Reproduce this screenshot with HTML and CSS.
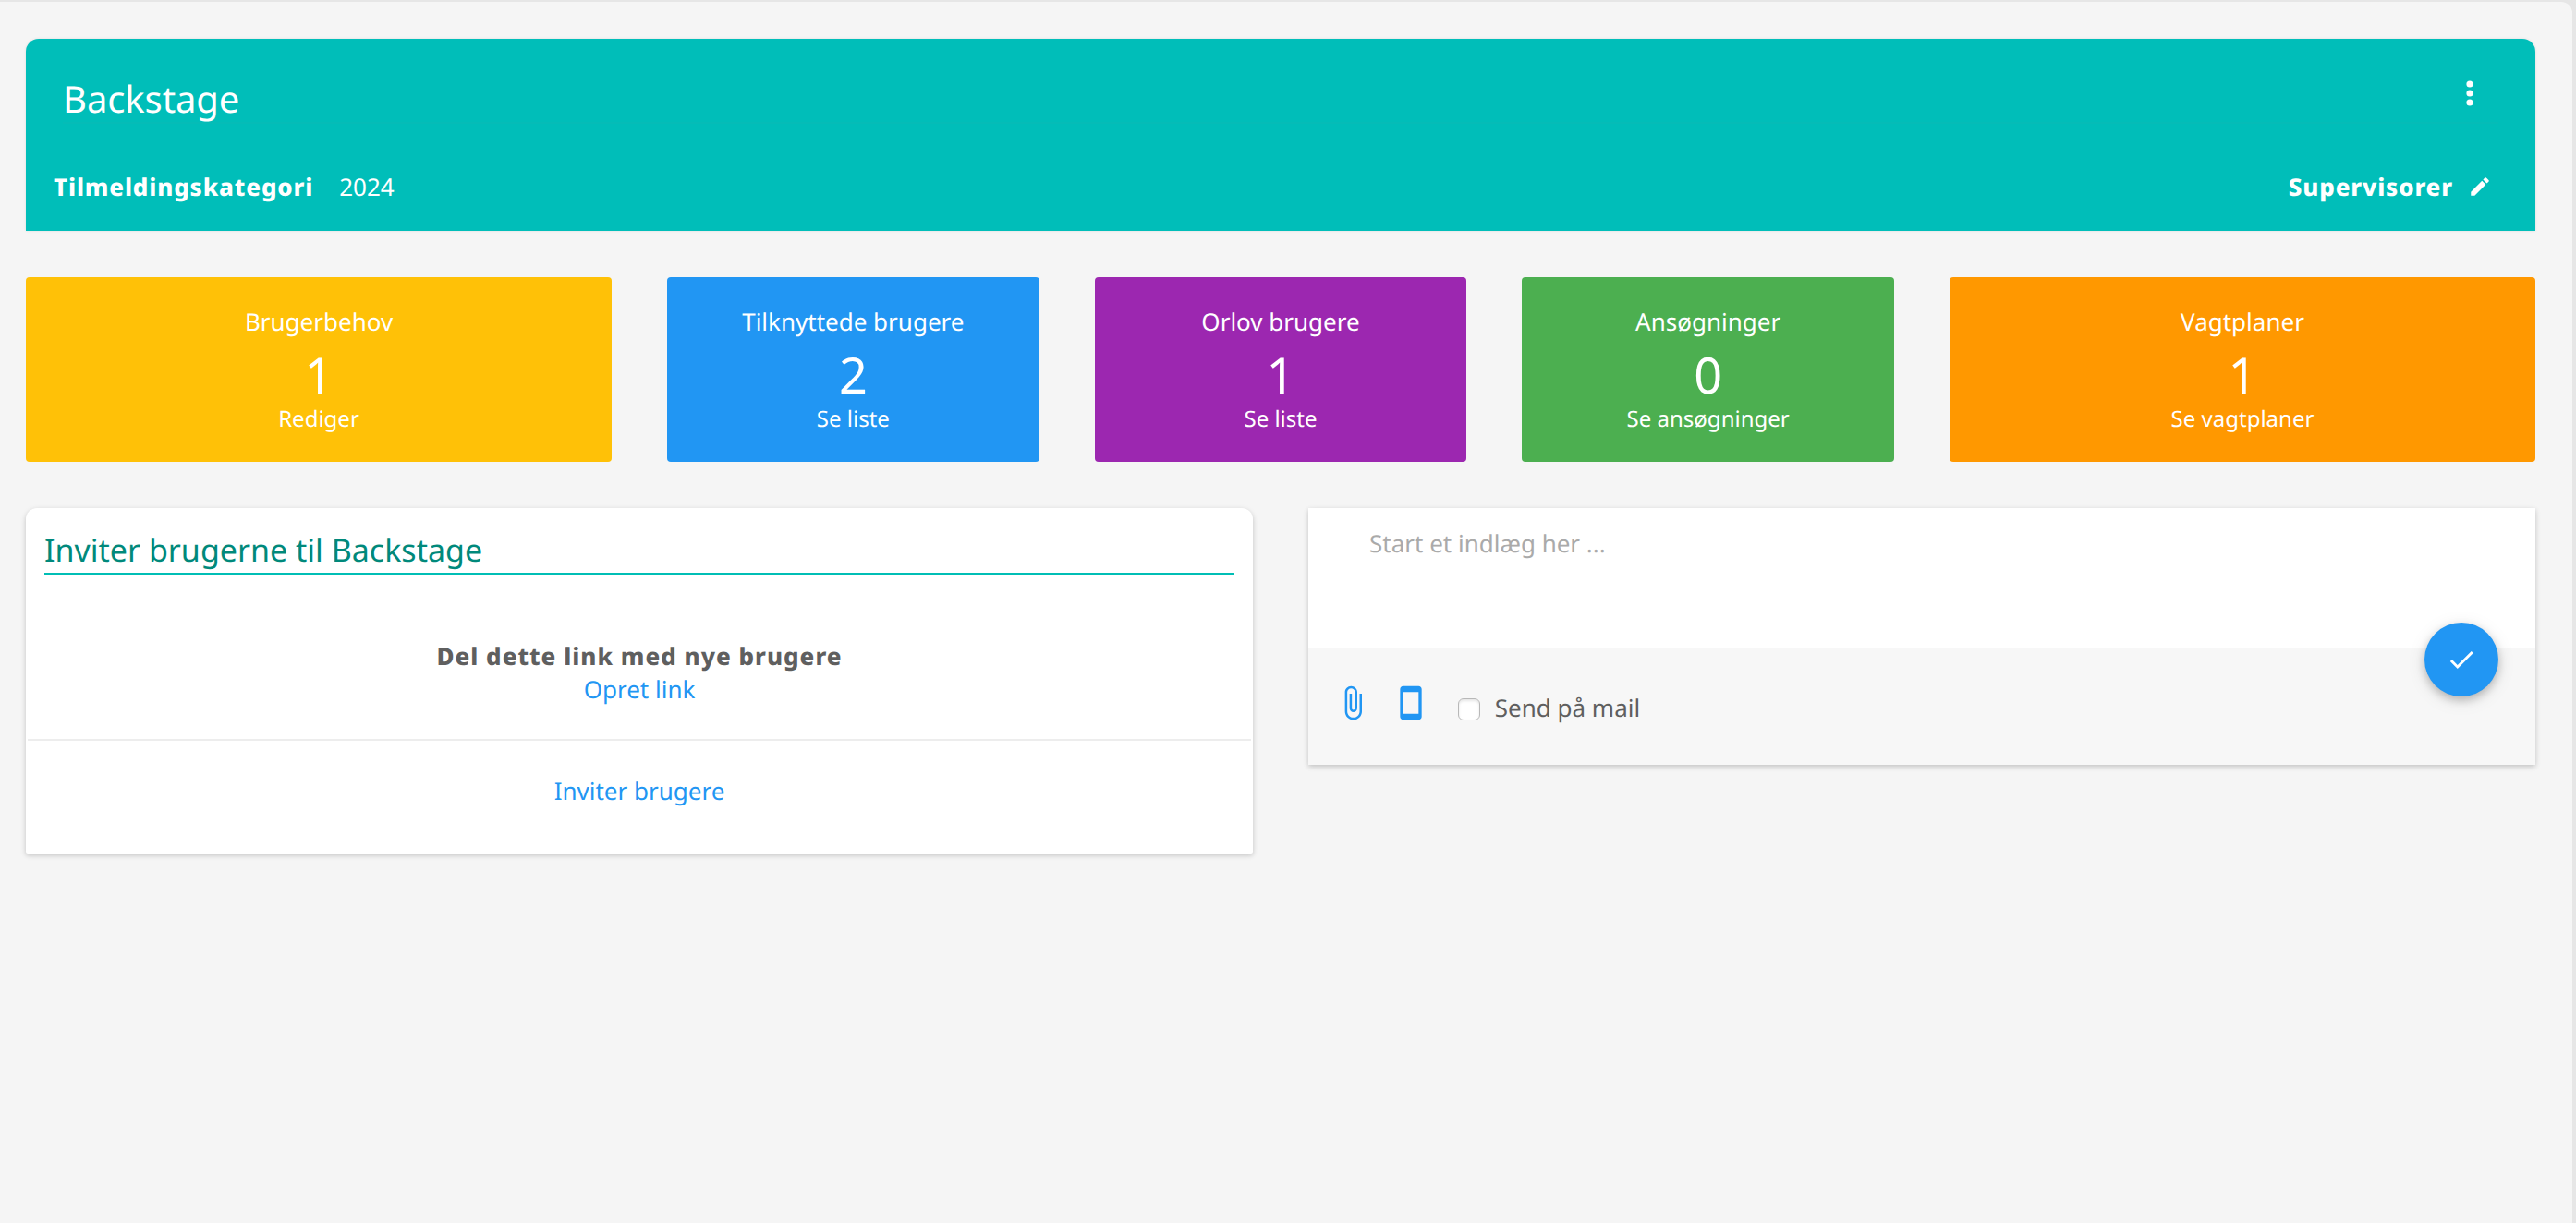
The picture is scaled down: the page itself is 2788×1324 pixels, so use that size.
FILE: index.html
```html
<!DOCTYPE html>
<html lang="da">
<head>
<meta charset="utf-8">
<title>Backstage</title>
<link rel="stylesheet" href="styles.css">
</head>
<body>
<main class="page">
  <header class="hero">
    <div class="hero-top">
      <h1>Backstage</h1>
      <svg class="more" viewBox="0 0 40 40"><circle cx="20" cy="10" r="3.6"/><circle cx="20" cy="20" r="3.6"/><circle cx="20" cy="30" r="3.6"/></svg>
    </div>
    <div class="hero-meta">
      <b>Tilmeldingskategori</b>
      <span class="year">2024</span>
      <b class="supervisors">Supervisorer</b>
      <svg class="edit" viewBox="0 0 24 24"><path d="M3 17.25V21h3.75L17.81 9.94l-3.75-3.75L3 17.25zM20.71 7.04a1 1 0 0 0 0-1.41l-2.34-2.34a1 1 0 0 0-1.41 0l-1.83 1.83 3.75 3.75 1.83-1.83z"/></svg>
    </div>
  </header>

  <section class="tiles">
    <a class="tile amber"><span class="tile-title">Brugerbehov</span><span class="tile-count">1</span><span class="tile-action">Rediger</span></a>
    <a class="tile blue"><span class="tile-title">Tilknyttede brugere</span><span class="tile-count">2</span><span class="tile-action">Se liste</span></a>
    <a class="tile purple"><span class="tile-title">Orlov brugere</span><span class="tile-count">1</span><span class="tile-action">Se liste</span></a>
    <a class="tile green"><span class="tile-title">Ansøgninger</span><span class="tile-count">0</span><span class="tile-action">Se ansøgninger</span></a>
    <a class="tile orange"><span class="tile-title">Vagtplaner</span><span class="tile-count">1</span><span class="tile-action">Se vagtplaner</span></a>
  </section>

  <section class="columns">
    <div class="card invite">
      <h2>Inviter brugerne til Backstage</h2>
      <div class="share">
        <b>Del dette link med nye brugere</b>
        <a>Opret link</a>
      </div>
      <div class="invite-users"><a>Inviter brugere</a></div>
    </div>
    <div class="card post">
      <div class="post-input">Start et indlæg her ...</div>
      <div class="post-bar">
        <svg class="tool" viewBox="0 0 24 24"><path d="M16.5 6v11.5c0 2.21-1.79 4-4 4s-4-1.79-4-4V5a2.5 2.5 0 0 1 5 0v10.5c0 .55-.45 1-1 1s-1-.45-1-1V6H10v9.5a2.5 2.5 0 0 0 5 0V5c0-2.21-1.79-4-4-4S7 2.79 7 5v12.5c0 3.04 2.46 5.5 5.5 5.5s5.5-2.46 5.5-5.5V6h-1.5z"/></svg>
        <svg class="tool" viewBox="0 0 24 24"><path d="M17 1.01L7 1c-1.1 0-1.99.9-1.99 2v18c0 1.1.89 2 1.99 2h10c1.1 0 2-.9 2-2V3c0-1.1-.9-1.99-2-1.99zM17 19H7V5h10v14z"/></svg>
        <span class="checkbox"></span>
        <span class="mail-label">Send på mail</span>
      </div>
      <button class="send" aria-label="Send"><svg viewBox="0 0 24 24"><path d="M9 16.17L4.83 12l-1.42 1.41L9 19 21 7l-1.41-1.41z"/></svg></button>
    </div>
  </section>
</main>
</body>
</html>
```
FILE: styles.css
```css
* { box-sizing: border-box; }
body {
  margin: 0;
  height: 1324px;
  padding: 2px 4px 0 0;
  overflow: hidden;
  background: #e6e6e6;
  font: 26px/36px "Noto Sans", sans-serif;
  text-rendering: geometricPrecision;
  color: #5f5f5f;
}
h1, h2 { margin: 0; font-weight: 400; }
b { font-weight: 800; letter-spacing: .85px; }
svg { display: block; fill: currentColor; }
.page {
  height: 1322px;
  padding: 40px 40px 0 28px;
  background: #f5f5f5;
  border-top-right-radius: 12px;
}

.hero {
  height: 208px;
  padding: 38px 40px 0 30px;
  background: #00beb9;
  color: #fff;
  border-radius: 14px 14px 0 0;
  box-shadow: 0 0 3px rgba(0, 0, 0, .1);
}
.hero-top {
  display: flex;
  justify-content: space-between;
  margin-left: 10px;
  border-bottom: 2px solid #05bcb7;
}
h1 { height: 52px; font-size: 40px; line-height: 54px; letter-spacing: -.1px; }
.more { width: 40px; height: 40px; margin: 1px 11px 0 0; }
.hero-meta {
  display: flex;
  height: 40px;
  margin-top: 48px;
  line-height: 40px;
}
.year { margin-left: 28px; }
.supervisors { margin-left: auto; }
.edit { width: 26px; height: 26px; margin: 7px 7px 0 16px; }

.tiles {
  display: grid;
  grid-template-columns: 634px 1fr 1fr 1fr 634px;
  gap: 60px;
  margin-top: 50px;
}
.tile {
  display: flex;
  flex-direction: column;
  height: 200px;
  padding-top: 30px;
  border-radius: 4px;
  color: #fff;
  text-align: center;
}
.tile-count { margin-top: 8px; font-size: 54px; line-height: 62px; }
.tile-action { font-size: 24px; line-height: 36px; }
.amber { background: #ffc107; }
.blue { background: #2196f3; }
.purple { background: #9c27b0; }
.green { background: #4caf50; }
.orange { background: #ff9800; }

.columns {
  display: grid;
  grid-template-columns: 1fr 1fr;
  align-items: start;
  gap: 60px;
  margin-top: 50px;
}
.card {
  background: #fff;
  box-shadow: 0 2px 5px rgba(0, 0, 0, .16), 0 2px 8px rgba(0, 0, 0, .06);
}
.card a { color: #2196f3; }
.invite { height: 374px; border-radius: 12px 12px 2px 2px; }
h2 {
  height: 72px;
  margin: 0 20px;
  padding-top: 20px;
  border-bottom: 2px solid #00beb5;
  color: #00897b;
  font-size: 34px;
  line-height: 50px;
}
.share {
  display: flex;
  flex-direction: column;
  height: 180px;
  margin: 0 2px;
  padding-top: 70px;
  border-bottom: 2px solid #ededed;
  text-align: center;
}
.share b { letter-spacing: 1px; }
.invite-users { padding-top: 36px; text-align: center; }

.post { position: relative; height: 278px; }
.post-input {
  height: 152px;
  padding: 20px 66px;
  color: #aaa;
}
.post-bar {
  display: flex;
  height: 126px;
  padding: 38px 28px 0;
  background: #f7f7f7;
}
.tool { width: 40px; height: 40px; margin: 1px 23.4px 0 0; color: #2196f3; }
.checkbox {
  width: 24px;
  height: 24px;
  margin: 16px 16px 0 7px;
  border: 1px solid #b8b8b8;
  border-radius: 6px;
  background: #fff;
  box-shadow: inset 0 2px 3px rgba(0, 0, 0, .1);
}
.mail-label { margin-top: 8px; }
.send {
  position: absolute;
  top: 124px;
  right: 40px;
  display: grid;
  place-items: center;
  width: 80px;
  height: 80px;
  padding: 0 1px 0 0;
  border: 0;
  border-radius: 50%;
  background: #2196f3;
  color: #fff;
  box-shadow: 0 4px 10px rgba(0, 0, 0, .22), 0 4px 20px rgba(0, 0, 0, .1);
}
.send svg { width: 34px; height: 34px; }
```
